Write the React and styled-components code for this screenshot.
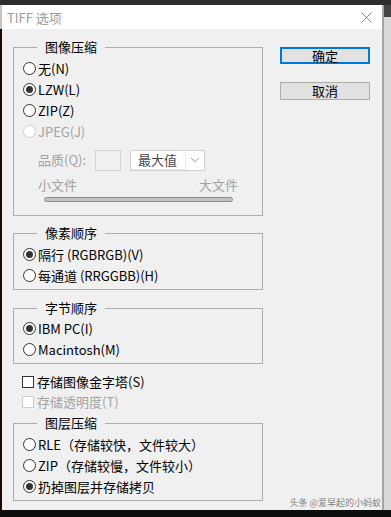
import React from 'react'
import styled, { createGlobalStyle } from 'styled-components'

const Global = createGlobalStyle`
  html, body { margin: 0; padding: 0; background: #0e0e0e; }
  body {
    font-family: "Noto Sans CJK SC", "Noto Sans", sans-serif;
    font-size: 13px;
    color: #000;
  }
  * { box-sizing: border-box; }
`

const Screen = styled.div`
  width: 391px;
  height: 517px;
  display: flex;
  flex-direction: column;
  background: #0e0e0e;
  overflow: hidden;
`
const TopBar = styled.div`
  height: 5px;
  flex-shrink: 0;
  background: #2d2d2d;
`
const Middle = styled.div`
  display: flex;
  height: 505px;
  flex-shrink: 0;
`
const LeftEdge = styled.div`
  width: 2px;
  background: linear-gradient(#c4c4c4 0 24px, #1c0606 24px);
`
const RightEdge = styled.div`
  flex: 1;
  background: linear-gradient(#444 0 12px, #d9d9d9 12px);
  box-shadow: inset 2px 0 0 #a3a3a3;
`
const Dialog = styled.div`
  position: relative;
  width: 380px;
  display: flex;
  flex-direction: column;
  background: #f0f0f0;
`
const TitleBar = styled.div`
  height: 24px;
  flex-shrink: 0;
  background: #fff;
  display: flex;
  align-items: center;
  justify-content: space-between;
  padding: 0 10px 0 5px;
  color: #9a9a9a;
  font-size: 13px;
`
const Body = styled.div`
  flex: 1;
  display: flex;
  padding: 10px 12px 0 11px;
`
const LeftCol = styled.div`
  width: 250px;
  display: flex;
  flex-direction: column;
`
const RightCol = styled.div`
  width: 90px;
  margin-left: 17px;
  padding-top: 8px;
  display: flex;
  flex-direction: column;
`
const Group = styled.fieldset`
  margin: ${p => p.$mt || 0}px 0 0;
  padding: ${p => p.$pt ?? 3}px 0 ${p => p.$pb ?? 3}px 9px;
  border: 1px solid #adadad;
  min-width: 0;
  display: flex;
  flex-direction: column;
`
const Legend = styled.legend`
  margin-left: 14px;
  padding: 0 8px;
  font-size: 13px;
  line-height: 16px;
`
const Row = styled.div`
  display: flex;
  align-items: center;
  gap: ${p => p.$gap ?? 2}px;
  height: ${p => p.$h || 21}px;
  padding-left: ${p => p.$indent || 0}px;
  line-height: 16px;
  white-space: nowrap;
  color: ${p => (p.$disabled ? '#a2a2a2' : '#000')};
`
const RadioDot = styled.span`
  width: 13px;
  height: 13px;
  flex-shrink: 0;
  border-radius: 50%;
  border: 1px solid ${p => (p.$disabled ? '#cdcdcd' : '#333')};
  background: #fff;
  display: flex;
  align-items: center;
  justify-content: center;
  &::after {
    content: '';
    width: 7px;
    height: 7px;
    border-radius: 50%;
    background: #333;
    display: ${p => (p.$checked ? 'block' : 'none')};
  }
`
const CheckBox = styled.span`
  width: 12px;
  height: 12px;
  flex-shrink: 0;
  border: 1px solid ${p => (p.$disabled ? '#cdcdcd' : '#333')};
  background: #fff;
`
const QualityLabel = styled.span`
  width: 57px;
  color: #a2a2a2;
`
const QualityBox = styled.span`
  width: 26px;
  height: 21px;
  border: 1px solid #d2d2d2;
  background: #f0f0f0;
`
const Select = styled.span`
  margin-left: 9px;
  width: 75px;
  height: 21px;
  border: 1px solid #d0d0d0;
  background: #fff;
  display: flex;
  align-items: stretch;
`
const SelectValue = styled.span`
  flex: 1;
  padding-left: 6px;
  display: flex;
  align-items: center;
  color: #4a4a4a;
  border-right: 1px solid #ececec;
  border-bottom: 1px solid #ececec;
  margin: 1px 0 0 1px;
`
const SelectArrow = styled.span`
  width: 18px;
  display: flex;
  align-items: center;
  justify-content: center;
`
const FileRow = styled.div`
  margin: 6px 0 0 15px;
  width: 200px;
  height: 16px;
  line-height: 16px;
  display: flex;
  justify-content: space-between;
  color: #a2a2a2;
`
const Track = styled.div`
  margin: 4px 0 0 21px;
  width: 189px;
  height: 5px;
  border: 1px solid #8c8c8c;
  border-radius: 3px;
  background: #c2c2c2;
`
const Button = styled.div`
  height: ${p => (p.$primary ? 17 : 18)}px;
  margin-top: ${p => p.$mt || 0}px;
  border: ${p => (p.$primary ? '2px solid #0078d7' : '1px solid #adadad')};
  background: #e1e1e1;
  display: flex;
  align-items: center;
  justify-content: center;
  font-size: 13px;
  line-height: 14px;
`
const Watermark = styled.div`
  position: absolute;
  right: 1px;
  bottom: 2px;
  font-size: 9px;
  line-height: 11px;
  color: #7c7c7c;
  text-shadow: 0 0 1px #fff;
  white-space: nowrap;
`

const Radio = ({ checked, disabled, children }) => (
  <Row $disabled={disabled}>
    <RadioDot $checked={checked} $disabled={disabled} />
    <span>{children}</span>
  </Row>
)

const Check = ({ disabled, children }) => (
  <Row $h={20} $gap={3} $indent={9} $disabled={disabled}>
    <CheckBox $disabled={disabled} />
    <span>{children}</span>
  </Row>
)

const CloseIcon = () => (
  <svg width="11" height="11" viewBox="0 0 11 11">
    <path d="M0.5 0.5 L10.5 10.5 M10.5 0.5 L0.5 10.5" stroke="#8a8a8a" strokeWidth="1" />
  </svg>
)

const Chevron = () => (
  <svg width="10" height="6" viewBox="0 0 10 6">
    <path d="M1 1 L5 5 L9 1" fill="none" stroke="#a8a8a8" strokeWidth="1" />
  </svg>
)

export default function App() {
  return (
    <Screen>
      <Global />
      <TopBar />
      <Middle>
        <LeftEdge />
        <Dialog>
          <TitleBar>
            <span>TIFF 选项</span>
            <CloseIcon />
          </TitleBar>
          <Body>
            <LeftCol>
              <Group $pb={13}>
                <Legend>图像压缩</Legend>
                <Radio>无(N)</Radio>
                <Radio checked>LZW(L)</Radio>
                <Radio>ZIP(Z)</Radio>
                <Radio disabled>JPEG(J)</Radio>
                <Row $h={22} $indent={15} $gap={0} style={{ marginTop: 7 }}>
                  <QualityLabel>品质(Q):</QualityLabel>
                  <QualityBox />
                  <Select>
                    <SelectValue>最大值</SelectValue>
                    <SelectArrow><Chevron /></SelectArrow>
                  </Select>
                </Row>
                <FileRow>
                  <span>小文件</span>
                  <span>大文件</span>
                </FileRow>
                <Track />
              </Group>

              <Group $mt={9}>
                <Legend>像素顺序</Legend>
                <Radio checked>隔行 (RGBRGB)(V)</Radio>
                <Radio>每通道 (RRGGBB)(H)</Radio>
              </Group>

              <Group $mt={10} $pt={2}>
                <Legend>字节顺序</Legend>
                <Radio checked>IBM PC(I)</Radio>
                <Radio>Macintosh(M)</Radio>
              </Group>

              <div style={{ marginTop: 8 }}>
                <Check>存储图像金字塔(S)</Check>
                <Check disabled>存储透明度(T)</Check>
              </div>

              <Group $mt={3}>
                <Legend>图层压缩</Legend>
                <Radio>RLE（存储较快，文件较大）</Radio>
                <Radio>ZIP（存储较慢，文件较小）</Radio>
                <Radio checked>扔掉图层并存储拷贝</Radio>
              </Group>
            </LeftCol>
            <RightCol>
              <Button $primary>确定</Button>
              <Button $mt={18}>取消</Button>
            </RightCol>
          </Body>
          <Watermark>头条 @爱早起的小蚂蚁</Watermark>
        </Dialog>
        <RightEdge />
      </Middle>
    </Screen>
  )
}
